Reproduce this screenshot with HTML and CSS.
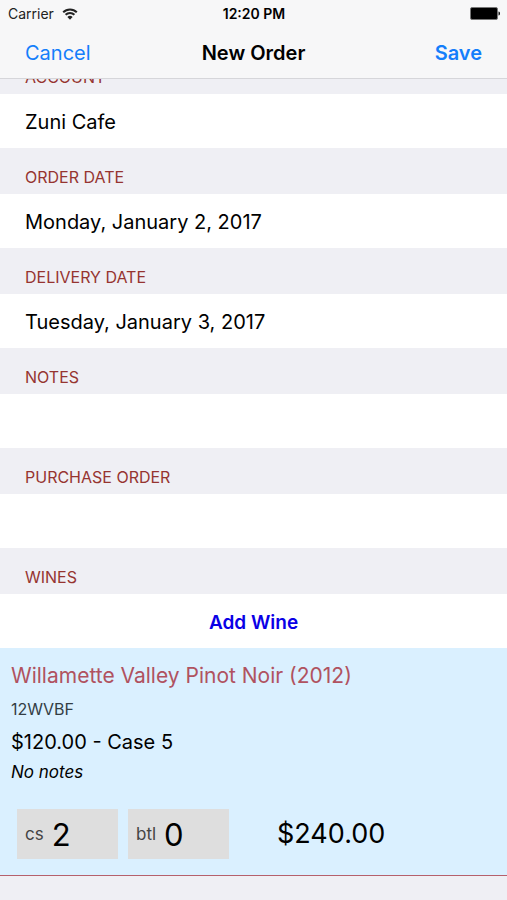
FILE: index.html
```html
<!DOCTYPE html>
<html lang="en">
<head>
<meta charset="utf-8">
<meta name="viewport" content="width=device-width, initial-scale=1">
<title>New Order</title>
<link rel="stylesheet" href="styles.css">
</head>
<body>
<header class="top">
  <div class="status">
    <span class="carrier">Carrier
      <svg class="wifi" viewBox="0 0 16 12" aria-hidden="true">
        <path d="M1.2 4.3a9.6 9.6 0 0 1 13.6 0M3.6 6.8a6.2 6.2 0 0 1 8.8 0" fill="none" stroke="currentColor" stroke-width="2"/>
        <path d="M8 11.8 5.4 9a3.7 3.7 0 0 1 5.2 0z" fill="currentColor"/>
      </svg>
    </span>
    <span class="clock">12:20 PM</span>
    <svg class="battery" viewBox="0 0 30 13" aria-hidden="true">
      <rect x="0.5" y="0.5" width="27" height="12" rx="1.5" fill="#000" stroke="#777"/>
      <path d="M28.5 4.5c1.2.4 1.5 1.100 1.500 2s-.3 1.600-1.500 2z" fill="#111"/>
    </svg>
  </div>
  <nav class="nav">
    <button class="link" type="button">Cancel</button>
    <h1 class="title">New Order</h1>
    <button class="link save" type="submit" form="order">Save</button>
  </nav>
</header>
<form class="order" id="order">
  <label class="heading" for="account">ACCOUNT</label>
  <input class="cell" id="account" type="text" value="Zuni Cafe">
  <label class="heading" for="order-date">ORDER DATE</label>
  <input class="cell" id="order-date" type="text" value="Monday, January 2, 2017">
  <label class="heading" for="delivery-date">DELIVERY DATE</label>
  <input class="cell" id="delivery-date" type="text" value="Tuesday, January 3, 2017">
  <label class="heading" for="notes">NOTES</label>
  <input class="cell" id="notes" type="text">
  <label class="heading" for="purchase-order">PURCHASE ORDER</label>
  <input class="cell" id="purchase-order" type="text">
  <h2 class="heading">WINES</h2>
  <button class="cell add" type="button">Add Wine</button>
  <article class="wine">
    <h3 class="name">Willamette Valley Pinot Noir (2012)</h3>
    <p class="code">12WVBF</p>
    <p class="price">$120.00 - Case 5</p>
    <p class="remark">No notes</p>
    <div class="amounts">
      <div class="quantity">
        <label class="unit" for="cases">cs</label>
        <input class="count" id="cases" type="text" inputmode="numeric" value="2">
      </div>
      <div class="quantity">
        <label class="unit" for="bottles">btl</label>
        <input class="count" id="bottles" type="text" inputmode="numeric" value="0">
      </div>
      <output class="total" for="cases bottles">$240.00</output>
    </div>
  </article>
</form>
</body>
</html>
```
FILE: styles.css
```css
* {
  box-sizing: border-box;
}

body {
  margin: 0;
  background: #efeff4;
  color: #000;
  font-family: Inter, "Liberation Sans", sans-serif;
  font-size: 20px;
}

h1, h2, h3, p {
  margin: 0;
  font-weight: 400;
}

button, input {
  border: 0;
  border-radius: 0;
  padding: 0;
  background: none;
  color: inherit;
  font: inherit;
}

.top {
  position: sticky;
  top: 0;
  z-index: 1;
  background: #f7f7f8;
  border-bottom: 1px solid #d6d6da;
}

.status {
  display: grid;
  grid-template-columns: 1fr auto 1fr;
  align-items: center;
  height: 27px;
  padding: 0 7px 0 8px;
  font-size: 14px;
}

.carrier {
  display: flex;
  align-items: center;
  gap: 8px;
  color: #222;
}

.wifi {
  width: 16px;
  height: 12px;
}

.clock {
  font-weight: 600;
}

.battery {
  width: 30px;
  height: 13px;
  justify-self: end;
}

.nav {
  display: grid;
  grid-template-columns: 1fr auto 1fr;
  align-items: center;
  height: 51px;
  padding: 0 25px;
}

.link {
  justify-self: start;
  color: #147efb;
}

.title {
  font-size: 20px;
  font-weight: 600;
}

.save {
  justify-self: end;
  font-weight: 600;
}

/* The first heading starts scrolled under the navigation bar. */
.order {
  display: flex;
  flex-direction: column;
  margin-top: -31px;
}

.heading {
  height: 46px;
  padding: 19px 25px 0;
  color: #963430;
  font-size: 16px;
  line-height: 20px;
}

.cell {
  width: 100%;
  height: 54px;
  padding: 2px 25px 0;
  background: #fff;
}

.add {
  color: #0a00e6;
  font-size: 19px;
  font-weight: 600;
}

.wine {
  padding: 13px 11px 16px;
  background: #daf0ff;
  border-bottom: 1px solid #b5606c;
}

.name {
  color: #b05260;
  font-size: 21px;
  line-height: 30px;
}

.code {
  color: #333d44;
  font-size: 16px;
  line-height: 36px;
}

.price {
  line-height: 30px;
}

.remark {
  font-size: 17px;
  font-style: italic;
  line-height: 30px;
}

.amounts {
  display: flex;
  align-items: center;
  gap: 10px;
  padding: 22px 6px 0;
}

.quantity {
  display: flex;
  align-items: center;
  gap: 8px;
  width: 101px;
  height: 50px;
  padding: 0 8px;
  background: #dedede;
}

.unit {
  color: #444;
  font-size: 17px;
}

.count {
  flex: 1;
  min-width: 0;
  font-size: 31px;
}

.total {
  margin-left: 38px;
  font-size: 27px;
  line-height: 30px;
}
```
